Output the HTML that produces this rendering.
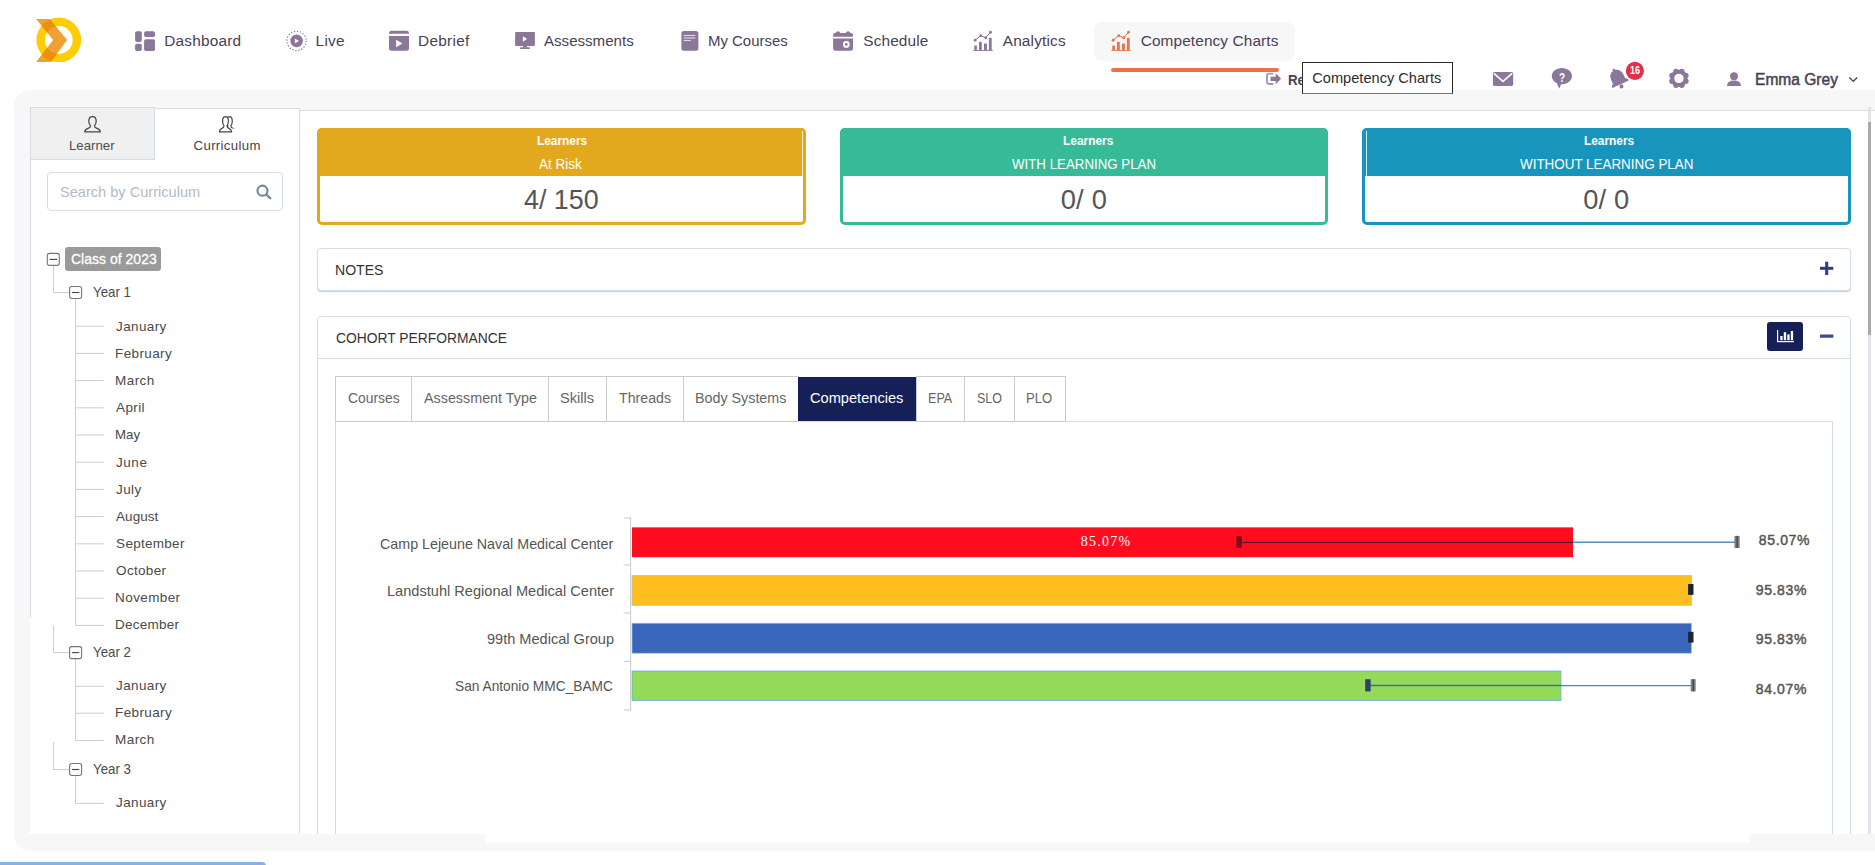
<!DOCTYPE html><html lang="en"><head><meta charset="utf-8"><title>Competency Charts</title><style>
html,body{margin:0;padding:0}
body{width:1875px;height:865px;overflow:hidden;background:#fff;position:relative;font-family:"Liberation Sans",sans-serif}
.b{position:absolute;display:block}
.t{position:absolute;white-space:nowrap;line-height:1;display:block;transform-origin:0 50%}

</style></head><body>
<div class="b" style="left:14px;top:90px;width:1861px;height:761px;background:#f7f7f7;border-radius:16px 0 0 16px"></div>
<div class="b" style="left:1094px;top:22px;width:201px;height:39px;background:#f7f7f7;border-radius:8px"></div>
<div class="b" style="left:1111px;top:68px;width:168px;height:4px;background:#e9724d;border-radius:2px"></div>
<div class="b" style="left:30px;top:108px;width:270px;height:726px;background:#fff"></div>
<div class="b" style="left:30px;top:107px;width:1px;height:510px;background:#d3dee6"></div>
<div class="b" style="left:299px;top:108px;width:1px;height:726px;background:#d3dee6"></div>
<div class="b" style="left:154px;top:108px;width:146px;height:1px;background:#d3dee6"></div>
<div class="b" style="left:30px;top:107px;width:125px;height:53px;background:#f0f0f0;border:1px solid #d3dee6;box-sizing:border-box"></div>
<div class="b" style="left:47px;top:172px;width:236px;height:39px;background:#fff;border:1px solid #d3dee6;border-radius:4px;box-sizing:border-box"></div>
<div class="b" style="left:65px;top:247px;width:96px;height:24px;background:#9a9a9a;border-radius:3px"></div>
<div class="b" style="left:300px;top:110px;width:1575px;height:724px;background:#fff;border-top:1px solid #d3dee6;box-sizing:border-box"></div>
<div class="b" style="left:485px;top:834px;width:1265px;height:9px;background:#fff"></div>
<div class="b" style="left:1868px;top:107px;width:3px;height:727px;background:#e5e3ea"></div>
<div class="b" style="left:1868px;top:122px;width:3px;height:213px;background:#a9a9a9"></div>
<div class="b" style="left:317px;top:128px;width:489px;height:97px;background:#fff;border:3px solid #e3a81e;border-radius:5px;box-sizing:border-box"></div>
<div class="b" style="left:317px;top:128px;width:489px;height:48px;background:#e3a81e;border-radius:5px 5px 0 0"></div>
<div class="b" style="left:840px;top:128px;width:488px;height:97px;background:#fff;border:3px solid #36ba98;border-radius:5px;box-sizing:border-box"></div>
<div class="b" style="left:840px;top:128px;width:488px;height:48px;background:#36ba98;border-radius:5px 5px 0 0"></div>
<div class="b" style="left:1362px;top:128px;width:489px;height:97px;background:#fff;border:3px solid #1895bd;border-radius:5px;box-sizing:border-box"></div>
<div class="b" style="left:1362px;top:128px;width:489px;height:48px;background:#1895bd;border-radius:5px 5px 0 0"></div>
<div class="b" style="left:802px;top:131px;width:1px;height:45px;background:#fbf1d6"></div>
<div class="b" style="left:1366px;top:131px;width:1px;height:45px;background:#d4edf6"></div>
<div class="b" style="left:317px;top:248px;width:1534px;height:43px;background:#fff;border:1px solid #d3dee6;border-radius:4px;box-sizing:border-box;box-shadow:0 1px 1px rgba(120,150,175,.45)"></div>
<div class="b" style="left:317px;top:316px;width:1534px;height:540px;background:#fff;border:1px solid #d3dee6;border-radius:4px 4px 0 0;box-sizing:border-box;clip-path:inset(0 0 22px 0)"></div>
<div class="b" style="left:318px;top:358px;width:1532px;height:1px;background:#d3dee6"></div>
<div class="b" style="left:1767px;top:322px;width:36px;height:29px;background:#152057;border-radius:3px"></div>
<div class="b" style="left:335px;top:421px;width:1498px;height:420px;border:1px solid #d3dee6;border-bottom:none;box-sizing:border-box;clip-path:inset(0 0 7px 0)"></div>
<div class="b" style="left:335px;top:376px;width:77px;height:46px;border:1px solid #ccc;box-sizing:border-box;background:#fff"></div>
<div class="b" style="left:411px;top:376px;width:138px;height:46px;border:1px solid #ccc;box-sizing:border-box;background:#fff"></div>
<div class="b" style="left:548px;top:376px;width:59px;height:46px;border:1px solid #ccc;box-sizing:border-box;background:#fff"></div>
<div class="b" style="left:606px;top:376px;width:78px;height:46px;border:1px solid #ccc;box-sizing:border-box;background:#fff"></div>
<div class="b" style="left:683px;top:376px;width:116px;height:46px;border:1px solid #ccc;box-sizing:border-box;background:#fff"></div>
<div class="b" style="left:798px;top:377px;width:118px;height:44px;background:#152057"></div>
<div class="b" style="left:916px;top:376px;width:49px;height:46px;border:1px solid #ccc;box-sizing:border-box;background:#fff"></div>
<div class="b" style="left:964px;top:376px;width:51px;height:46px;border:1px solid #ccc;box-sizing:border-box;background:#fff"></div>
<div class="b" style="left:1014px;top:376px;width:52px;height:46px;border:1px solid #ccc;box-sizing:border-box;background:#fff"></div>
<div class="b" style="left:0;top:862px;width:266px;height:4px;background:#8ab0ea;border-radius:0 4px 0 0"></div>
<div class="b" style="left:1302px;top:62px;width:151px;height:32px;background:#fff;border:1px solid #2b2b2b;border-bottom-color:#767676;box-sizing:border-box;z-index:4"></div>
<svg class="b" width="1875" height="865" viewBox="0 0 1875 865" style="left:0;top:0">
<defs><clipPath id="lg"><rect x="30" y="15" width="60" height="46.9"/></clipPath><clipPath id="rg"><path clip-rule="evenodd" d="M36.4,40 a22.4,22.4 0 1 0 44.8,0 a22.4,22.4 0 1 0 -44.8,0 z M44.9,40 a13.9,13.9 0 1 0 27.8,0 a13.9,13.9 0 1 0 -27.8,0 z"/></clipPath></defs>
<g clip-path="url(#lg)">
<path fill-rule="evenodd" fill="#ffcd05" d="M36.4,40 a22.4,22.4 0 1 0 44.8,0 a22.4,22.4 0 1 0 -44.8,0 z M44.9,40 a13.9,13.9 0 1 0 27.8,0 a13.9,13.9 0 1 0 -27.8,0 z"/>
<polygon points="36.05,19 49.8,19 67.1,40.1 50.9,61.9 36.05,61.9 53.2,40.1" fill="#efa133"/>
<polygon points="36.05,19 49.8,19 67.1,40.1 50.9,61.9 36.05,61.9 53.2,40.1" fill="#ee9007" clip-path="url(#rg)"/>
</g>
<g fill="#8b7799">
<rect x="135.1" y="31.3" width="6.7" height="10.6" rx="1.8"/>
<rect x="135.1" y="43.8" width="6.7" height="7.2" rx="1.8"/>
<rect x="144.1" y="31.3" width="10.9" height="5.7" rx="1.8"/>
<rect x="144.1" y="39.2" width="10.9" height="11.8" rx="1.8"/>
</g>
<circle cx="296.6" cy="40.9" r="9.7" fill="none" stroke="#8b7799" stroke-width="1.15" stroke-dasharray="1.3 1.747"/>
<circle cx="296.6" cy="40.9" r="6.3" fill="#8b7799"/>
<polygon points="294.9,38.6 294.9,43.2 299,40.9" fill="#fff"/>
<path fill="#8b7799" d="M389,33.8 v-0.5 a2.5,2.5 0 0 1 2.5,-2.5 h15 a2.5,2.5 0 0 1 2.5,2.5 v0.5 z M389,36 h20 v12.3 a2.5,2.5 0 0 1 -2.5,2.5 h-15 a2.5,2.5 0 0 1 -2.5,-2.5 z"/>
<polygon points="396.1,39.8 396.1,47.3 402.5,43.5" fill="#fff"/>
<g fill="#8b7799"><rect x="515.1" y="32.1" width="19.8" height="13.9" rx="0.8"/><rect x="523" y="46" width="4" height="1.4"/><rect x="520.1" y="47.3" width="9.8" height="1.6" rx="0.5"/></g>
<polygon points="522.9,36.2 522.9,41.8 527.1,39" fill="#fff"/>
<rect x="681.4" y="31" width="17" height="19.8" rx="2.5" fill="#8b7799"/>
<g stroke="#fff" stroke-opacity=".75" stroke-width="1.1"><line x1="683.6" y1="35.5" x2="695.4" y2="35.5"/><line x1="683.6" y1="38" x2="695.4" y2="38"/><line x1="683.6" y1="40.5" x2="690.9" y2="40.5"/></g>
<path fill="#8b7799" d="M833.1,36.8 v-1.9 a2,2 0 0 1 2,-2 h0.6 a2.4,2.4 0 0 1 4.6,0 h5.5 a2.4,2.4 0 0 1 4.6,0 h0.6 a2,2 0 0 1 2,2 v1.9 z M833.1,38.5 h19.9 v9.8 a2.5,2.5 0 0 1 -2.5,2.5 h-14.9 a2.5,2.5 0 0 1 -2.5,-2.5 z"/>
<circle cx="846.3" cy="44.4" r="2.4" fill="#8b7799" stroke="#fff" stroke-width="2"/>
<g fill="#8b7799"><rect x="973.4" y="50.0" width="19.3" height="0.9"/><rect x="974.3" y="45.5" width="2.6" height="4.5"/><rect x="979.0" y="41.8" width="2.8" height="8.2"/><rect x="984.0" y="43.5" width="2.9" height="6.5"/><rect x="988.9" y="37.9" width="2.8" height="12.1"/><polyline points="975.1,40.2 980.7,35.7 985.7,37.7 990.5,32.3" fill="none" stroke="#8b7799" stroke-width="1"/><circle cx="975.1" cy="40.2" r="1.45"/><circle cx="980.7" cy="35.7" r="1.45"/><circle cx="985.7" cy="37.7" r="1.45"/><circle cx="990.5" cy="32.3" r="1.45"/></g>
<g fill="#e9724d"><rect x="1111.4" y="50.0" width="19.3" height="0.9"/><rect x="1112.3" y="45.5" width="2.6" height="4.5"/><rect x="1117.0" y="41.8" width="2.8" height="8.2"/><rect x="1122.0" y="43.5" width="2.9" height="6.5"/><rect x="1126.9" y="37.9" width="2.8" height="12.1"/><polyline points="1113.1,40.2 1118.7,35.7 1123.7,37.7 1128.5,32.3" fill="none" stroke="#e9724d" stroke-width="1"/><circle cx="1113.1" cy="40.2" r="1.45"/><circle cx="1118.7" cy="35.7" r="1.45"/><circle cx="1123.7" cy="37.7" r="1.45"/><circle cx="1128.5" cy="32.3" r="1.45"/></g>
<path d="M1272.6,73.6 h-3.4 a2.2,2.2 0 0 0 -2.2,2.2 v6 a2.2,2.2 0 0 0 2.2,2.2 h3.4" fill="none" stroke="#a797b4" stroke-width="1.9" stroke-linecap="round"/>
<path d="M1270.5,76.7 h5.2 v-3.4 l5.4,5.5 l-5.4,5.5 v-3.4 h-5.2 z" fill="#8b7799"/>
<rect x="1492.9" y="72.1" width="20.3" height="13.8" rx="1.6" fill="#8b7799"/>
<polyline points="1493.9,73.4 1503,81.4 1512.2,73.4" fill="none" stroke="#fff" stroke-width="1.6"/>
<path fill="#8b7799" d="M1561.9,68 c5.6,0 10.1,3.6 10.1,8.1 c0,4.5 -4.5,8.1 -10.1,8.1 c-0.3,0 -0.6,0 -0.9,0 c-0.4,1.9 -1.3,3.5 -1.6,4.4 c-0.4,-0.6 -1.6,-2.5 -2.2,-5.1 c-3.2,-1.4 -5.4,-4.2 -5.4,-7.4 c0,-4.5 4.5,-8.1 10.1,-8.1 z"/>
<g transform="translate(1618.1,79.0) rotate(-25)" fill="#8b7799">
<path d="M-1.3,-10 a1.3,1.3 0 0 1 2.6,0 v0.6 c3.4,0.8 5.4,3.6 5.4,7 v4.2 l2.35,2.8 v1.2 h-18.1 v-1.2 l2.35,-2.8 v-4.2 c0,-3.4 2,-6.2 5.4,-7 z"/>
<circle cx="0" cy="8.1" r="2"/>
</g>
<circle cx="1634.9" cy="70.9" r="9.1" fill="#e0314a"/>
<g fill="#8b7799">
<circle cx="1678.9" cy="78.4" r="8.6"/>
<circle cx="1685.83" cy="81.27" r="2.75"/>
<circle cx="1681.77" cy="85.33" r="2.75"/>
<circle cx="1676.03" cy="85.33" r="2.75"/>
<circle cx="1671.97" cy="81.27" r="2.75"/>
<circle cx="1671.97" cy="75.53" r="2.75"/>
<circle cx="1676.03" cy="71.47" r="2.75"/>
<circle cx="1681.77" cy="71.47" r="2.75"/>
<circle cx="1685.83" cy="75.53" r="2.75"/>
</g>
<circle cx="1678.9" cy="78.4" r="4.7" fill="#fff"/>
<g fill="#8b7799"><circle cx="1734" cy="76.2" r="3.9"/><path d="M1727.2,86 v-1 c0,-2.9 3,-4.5 6.8,-4.5 c3.8,0 6.8,1.6 6.8,4.5 v1 z"/></g>
<polyline points="1849.4,77.5 1853.3,81.4 1857.2,77.5" fill="none" stroke="#4a3f55" stroke-width="1.3"/>
<path d="M92.50,116.70 c-2.30,0 -3.70,2 -3.70,4.6 c0.00,1.9 0.70,3.5 1.80,4.4 c0.00,1.5 -0.40,1.9 -2.60,2.7 c-2.60,0.9 -3.30,1.5 -3.30,3.5 h15.60 c0.00,-2 -0.70,-2.6 -3.30,-3.5 c-2.20,-0.8 -2.60,-1.2 -2.60,-2.7 c1.10,-0.9 1.80,-2.5 1.80,-4.4 c0.00,-2.6 -1.40,-4.6 -3.70,-4.6 z" fill="none" stroke="#444" stroke-width="1.2" stroke-linejoin="round"/>
<defs><clipPath id="bk"><rect x="226" y="114" width="12" height="14.6"/></clipPath></defs>
<path d="M229.40,116.70 c-1.79,0 -2.89,2 -2.89,4.6 c0.00,1.9 0.55,3.5 1.40,4.4 c0.00,1.5 -0.31,1.9 -2.03,2.7 c-2.03,0.9 -2.57,1.5 -2.57,3.5 h12.17 c0.00,-2 -0.55,-2.6 -2.57,-3.5 c-1.72,-0.8 -2.03,-1.2 -2.03,-2.7 c0.86,-0.9 1.40,-2.5 1.40,-4.4 c0.00,-2.6 -1.09,-4.6 -2.89,-4.6 z" fill="none" stroke="#444" stroke-width="1.2" stroke-linejoin="round" clip-path="url(#bk)"/>
<path d="M225.50,116.70 c-1.79,0 -2.89,2 -2.89,4.6 c0.00,1.9 0.55,3.5 1.40,4.4 c0.00,1.5 -0.31,1.9 -2.03,2.7 c-2.03,0.9 -2.57,1.5 -2.57,3.5 h12.17 c0.00,-2 -0.55,-2.6 -2.57,-3.5 c-1.72,-0.8 -2.03,-1.2 -2.03,-2.7 c0.86,-0.9 1.40,-2.5 1.40,-4.4 c0.00,-2.6 -1.09,-4.6 -2.89,-4.6 z" fill="#fff" stroke="#444" stroke-width="1.2" stroke-linejoin="round"/>
<circle cx="262.5" cy="190.7" r="5" fill="none" stroke="#738997" stroke-width="2.2"/>
<line x1="266.3" y1="194.5" x2="270.2" y2="198.2" stroke="#738997" stroke-width="2.4" stroke-linecap="round"/>
<g fill="none" stroke="#cdcdcd" stroke-width="1">
<path d="M53.5,265.5 V292.5 H69.5"/>
<path d="M53.5,625.3 V652.6 H69.5"/>
<path d="M53.5,741.9 V769.5 H69.5"/>
<path d="M75.5,298.5 V625.5"/>
<path d="M75.5,326.2 H103.8"/>
<path d="M75.5,353.4 H103.8"/>
<path d="M75.5,380.6 H103.8"/>
<path d="M75.5,407.8 H103.8"/>
<path d="M75.5,435.0 H103.8"/>
<path d="M75.5,462.2 H103.8"/>
<path d="M75.5,489.4 H103.8"/>
<path d="M75.5,516.6 H103.8"/>
<path d="M75.5,543.8 H103.8"/>
<path d="M75.5,571.0 H103.8"/>
<path d="M75.5,598.2 H103.8"/>
<path d="M75.5,625.4 H103.8"/>
<path d="M75.5,658.6 V740.5"/>
<path d="M75.5,686.3 H103.8"/>
<path d="M75.5,713.2 H103.8"/>
<path d="M75.5,740.5 H103.8"/>
<path d="M75.5,775.5 V803.4 H103.8"/>
</g>
<rect x="47.3" y="253.4" width="12" height="12" rx="2.2" fill="#fff" stroke="#80736b" stroke-width="1.1"/>
<line x1="49.6" y1="259.4" x2="57.0" y2="259.4" stroke="#444" stroke-width="1.1"/>
<rect x="69.6" y="286.5" width="12" height="12" rx="2.2" fill="#fff" stroke="#80736b" stroke-width="1.1"/>
<line x1="71.9" y1="292.5" x2="79.3" y2="292.5" stroke="#444" stroke-width="1.1"/>
<rect x="69.6" y="646.6" width="12" height="12" rx="2.2" fill="#fff" stroke="#80736b" stroke-width="1.1"/>
<line x1="71.9" y1="652.6" x2="79.3" y2="652.6" stroke="#444" stroke-width="1.1"/>
<rect x="69.6" y="763.5" width="12" height="12" rx="2.2" fill="#fff" stroke="#80736b" stroke-width="1.1"/>
<line x1="71.9" y1="769.5" x2="79.3" y2="769.5" stroke="#444" stroke-width="1.1"/>
<g fill="#2f3b86"><rect x="1820" y="266.8" width="13.3" height="3"/><rect x="1825.2" y="261.7" width="3" height="13.3"/></g>
<rect x="1820" y="334.4" width="13.4" height="3.4" rx="0.6" fill="#3b4a92"/>
<g fill="#fff"><rect x="1777" y="330" width="1.2" height="12"/><rect x="1777" y="341" width="17" height="1.2"/><rect x="1780.3" y="336" width="2.3" height="4.2"/><rect x="1783.8" y="332.2" width="2.3" height="8"/><rect x="1787.3" y="334.4" width="2.3" height="5.8"/><rect x="1790.8" y="331" width="2.3" height="9.2"/></g>
<g fill="none" stroke="#c9c9c9" stroke-width="1"><path d="M630.6,517.6 V710.4"/>
<path d="M623.6,518.0 H630.6"/>
<path d="M623.6,565.0 H630.6"/>
<path d="M623.6,613.0 H630.6"/>
<path d="M623.6,661.4 H630.6"/>
<path d="M623.6,710.0 H630.6"/>
</g>
<rect x="632" y="527.5" width="941.0" height="29.7" fill="#ff0d1f"/>
<line x1="632" y1="527.5" x2="1573.0" y2="527.5" stroke="#8a86b8" stroke-width="0.8"/>
<rect x="632" y="575.5" width="1059.6" height="29.8" fill="#ffc01f" stroke="#9cc3e4" stroke-width="0.7"/>
<rect x="632" y="623.2" width="1059.4" height="30.0" fill="#3a66bb" stroke="#9cc3e4" stroke-width="0.7"/>
<rect x="632" y="671.0" width="929.0" height="29.6" fill="#93d95a" stroke="#62a8ee" stroke-width="0.7"/>
<line x1="1239" y1="542.4" x2="1573" y2="542.4" stroke="#4d0f2a" stroke-width="1"/>
<line x1="1573" y1="542.3" x2="1737" y2="542.3" stroke="#5a8cb6" stroke-width="1.4"/>
<rect x="1236.4" y="536.2" width="5.4" height="11.8" fill="#7d0a17"/>
<rect x="1734.4" y="535.9" width="5.3" height="12" fill="#7b8085"/><rect x="1736.5" y="535.9" width="1.2" height="12" fill="#3a4048"/>
<line x1="1368" y1="685.6" x2="1561" y2="685.6" stroke="#3f7196" stroke-width="1.5"/>
<line x1="1561" y1="685.6" x2="1693" y2="685.6" stroke="#4f86b4" stroke-width="1.4"/>
<rect x="1365.2" y="679.2" width="5.4" height="12.2" fill="#2a4270"/>
<rect x="1690.7" y="679.2" width="5" height="12.2" fill="#7b8085"/><rect x="1692.7" y="679.2" width="1.2" height="12.2" fill="#3a4048"/>
<rect x="1688.1" y="584" width="5.4" height="10.9" fill="#1a2530"/>
<rect x="1688.1" y="631.8" width="5.4" height="10.8" fill="#1a2530"/>
</svg>
<span class="t" style="left:164.20px;top:33.40px;font-size:15.4px;color:#4a3f55;letter-spacing:0.208px;">Dashboard</span>
<span class="t" style="left:315.60px;top:33.40px;font-size:15.4px;color:#4a3f55;letter-spacing:0.242px;">Live</span>
<span class="t" style="left:418.00px;top:33.40px;font-size:15.4px;color:#4a3f55;letter-spacing:0.277px;">Debrief</span>
<span class="t" style="left:544.30px;top:33.40px;font-size:15.4px;color:#4a3f55;transform:scaleX(0.9802);">Assessments</span>
<span class="t" style="left:708.33px;top:33.40px;font-size:15.4px;color:#4a3f55;transform:scaleX(0.9704);">My Courses</span>
<span class="t" style="left:863.30px;top:33.40px;font-size:15.4px;color:#4a3f55;letter-spacing:0.112px;">Schedule</span>
<span class="t" style="left:1002.70px;top:33.40px;font-size:15.4px;color:#4a3f55;letter-spacing:0.176px;">Analytics</span>
<span class="t" style="left:1140.70px;top:33.40px;font-size:15.4px;color:#4a3f55;letter-spacing:0.106px;">Competency Charts</span>
<span class="t" style="left:1288.30px;top:72.80px;font-size:14.8px;color:#4a3f55;font-weight:700;transform:scaleX(0.9000);">Re</span>
<span class="t" style="left:1312.30px;top:70.90px;font-size:14.6px;color:#2b2b2b;z-index:5;">Competency Charts</span>
<span class="t" style="left:1755.03px;top:71.91px;font-size:16px;color:#4a3f55;transform:scaleX(0.9722);-webkit-text-stroke:0.5px #4a3f55;">Emma Grey</span>
<span class="t" style="left:1630.20px;top:65.31px;font-size:10.6px;color:#fff;font-weight:700;transform:scaleX(0.8577);">16</span>
<span class="t" style="left:1558.90px;top:70.61px;font-size:13.4px;color:#fff;font-weight:700;transform:scaleX(0.7500);">?</span>
<span class="t" style="left:68.90px;top:139.00px;font-size:13.2px;color:#4d4d4d;letter-spacing:0.040px;">Learner</span>
<span class="t" style="left:193.60px;top:139.00px;font-size:13.2px;color:#444;letter-spacing:0.337px;">Curriculum</span>
<span class="t" style="left:59.80px;top:184.11px;font-size:15px;color:#b3bac8;transform:scaleX(0.9720);">Search by Curriculum</span>
<span class="t" style="left:70.50px;top:250.80px;font-size:15px;color:#fff;transform:scaleX(0.9346);-webkit-text-stroke:0.3px #fff;">Class of 2023</span>
<span class="t" style="left:93.40px;top:284.90px;font-size:14.4px;color:#4a4a4a;transform:scaleX(0.9227);">Year 1</span>
<span class="t" style="left:93.40px;top:644.81px;font-size:14.4px;color:#4a4a4a;transform:scaleX(0.9227);">Year 2</span>
<span class="t" style="left:93.40px;top:761.61px;font-size:14.4px;color:#4a4a4a;transform:scaleX(0.9227);">Year 3</span>
<span class="t" style="left:116.10px;top:319.91px;font-size:13.5px;color:#4a4a4a;letter-spacing:0.370px;">January</span>
<span class="t" style="left:115.10px;top:347.02px;font-size:13.5px;color:#4a4a4a;letter-spacing:0.376px;">February</span>
<span class="t" style="left:115.10px;top:374.15px;font-size:13.5px;color:#4a4a4a;letter-spacing:0.400px;">March</span>
<span class="t" style="left:116.10px;top:401.27px;font-size:13.5px;color:#4a4a4a;letter-spacing:0.373px;">April</span>
<span class="t" style="left:115.11px;top:428.38px;font-size:13.5px;color:#4a4a4a;transform:scaleX(0.9857);">May</span>
<span class="t" style="left:116.10px;top:455.50px;font-size:13.5px;color:#4a4a4a;letter-spacing:0.511px;">June</span>
<span class="t" style="left:116.10px;top:482.63px;font-size:13.5px;color:#4a4a4a;letter-spacing:0.381px;">July</span>
<span class="t" style="left:116.10px;top:509.75px;font-size:13.5px;color:#4a4a4a;letter-spacing:0.024px;">August</span>
<span class="t" style="left:116.10px;top:536.86px;font-size:13.5px;color:#4a4a4a;letter-spacing:0.282px;">September</span>
<span class="t" style="left:116.10px;top:563.99px;font-size:13.5px;color:#4a4a4a;letter-spacing:0.312px;">October</span>
<span class="t" style="left:115.10px;top:591.11px;font-size:13.5px;color:#4a4a4a;letter-spacing:0.389px;">November</span>
<span class="t" style="left:115.10px;top:618.22px;font-size:13.5px;color:#4a4a4a;letter-spacing:0.246px;">December</span>
<span class="t" style="left:116.10px;top:679.41px;font-size:13.5px;color:#4a4a4a;letter-spacing:0.370px;">January</span>
<span class="t" style="left:115.10px;top:706.41px;font-size:13.5px;color:#4a4a4a;letter-spacing:0.376px;">February</span>
<span class="t" style="left:115.10px;top:733.11px;font-size:13.5px;color:#4a4a4a;letter-spacing:0.400px;">March</span>
<span class="t" style="left:116.10px;top:796.30px;font-size:13.5px;color:#4a4a4a;letter-spacing:0.370px;">January</span>
<span class="t" style="left:536.70px;top:135.01px;font-size:12.4px;color:#fff;font-weight:700;transform:scaleX(0.9589);">Learners</span>
<span class="t" style="left:1062.60px;top:135.01px;font-size:12.4px;color:#fff;font-weight:700;transform:scaleX(0.9608);">Learners</span>
<span class="t" style="left:1583.60px;top:135.01px;font-size:12.4px;color:#fff;font-weight:700;transform:scaleX(0.9589);">Learners</span>
<span class="t" style="left:539.40px;top:157.01px;font-size:14.4px;color:#fff;transform:scaleX(0.9401);">At Risk</span>
<span class="t" style="left:1012.30px;top:157.01px;font-size:14.4px;color:#fff;transform:scaleX(0.9239);">WITH LEARNING PLAN</span>
<span class="t" style="left:1520.00px;top:157.01px;font-size:14.4px;color:#fff;transform:scaleX(0.9322);">WITHOUT LEARNING PLAN</span>
<span class="t" style="left:523.60px;top:185.91px;font-size:27.3px;color:#555;transform:scaleX(0.9840);">4/ 150</span>
<span class="t" style="left:1060.70px;top:185.91px;font-size:27.3px;color:#555;letter-spacing:0.217px;">0/ 0</span>
<span class="t" style="left:1583.30px;top:185.91px;font-size:27.3px;color:#555;letter-spacing:0.117px;">0/ 0</span>
<span class="t" style="left:334.79px;top:262.01px;font-size:15.4px;color:#333;transform:scaleX(0.9140);">NOTES</span>
<span class="t" style="left:335.70px;top:330.31px;font-size:15.4px;color:#333;transform:scaleX(0.8994);">COHORT PERFORMANCE</span>
<span class="t" style="left:347.70px;top:390.31px;font-size:15.4px;color:#666;transform:scaleX(0.9026);">Courses</span>
<span class="t" style="left:423.70px;top:390.31px;font-size:15.4px;color:#666;transform:scaleX(0.9313);">Assessment Type</span>
<span class="t" style="left:560.30px;top:390.31px;font-size:15.4px;color:#666;transform:scaleX(0.9498);">Skills</span>
<span class="t" style="left:619.00px;top:390.31px;font-size:15.4px;color:#666;transform:scaleX(0.9213);">Threads</span>
<span class="t" style="left:695.07px;top:390.31px;font-size:15.4px;color:#666;transform:scaleX(0.9287);">Body Systems</span>
<span class="t" style="left:810.00px;top:390.31px;font-size:15.4px;color:#fff;transform:scaleX(0.9495);">Competencies</span>
<span class="t" style="left:927.88px;top:390.31px;font-size:15.4px;color:#666;transform:scaleX(0.8167);">EPA</span>
<span class="t" style="left:977.30px;top:390.31px;font-size:15.4px;color:#666;transform:scaleX(0.8110);">SLO</span>
<span class="t" style="left:1026.15px;top:390.31px;font-size:15.4px;color:#666;transform:scaleX(0.8483);">PLO</span>
<span class="t" style="left:380.40px;top:536.91px;font-size:14.8px;color:#555;transform:scaleX(0.9645);">Camp Lejeune Naval Medical Center</span>
<span class="t" style="left:386.61px;top:584.21px;font-size:14.8px;color:#555;transform:scaleX(0.9857);">Landstuhl Regional Medical Center</span>
<span class="t" style="left:486.90px;top:631.60px;font-size:14.8px;color:#555;transform:scaleX(0.9837);">99th Medical Group</span>
<span class="t" style="left:454.70px;top:679.01px;font-size:14.8px;color:#555;transform:scaleX(0.9278);">San Antonio MMC_BAMC</span>
<span class="t" style="left:1758.80px;top:533.00px;font-size:14px;color:#555;letter-spacing:0.633px;-webkit-text-stroke:0.45px #555;">85.07%</span>
<span class="t" style="left:1755.70px;top:582.91px;font-size:14px;color:#555;letter-spacing:0.653px;-webkit-text-stroke:0.45px #555;">95.83%</span>
<span class="t" style="left:1755.70px;top:632.41px;font-size:14px;color:#555;letter-spacing:0.653px;-webkit-text-stroke:0.45px #555;">95.83%</span>
<span class="t" style="left:1755.70px;top:681.71px;font-size:14px;color:#555;letter-spacing:0.653px;-webkit-text-stroke:0.45px #555;">84.07%</span>
<span class="t" style="left:1080.70px;top:535.30px;font-size:14px;color:#fff;font-family:'Liberation Serif', serif;letter-spacing:1.240px;">85.07%</span>
</body></html>
